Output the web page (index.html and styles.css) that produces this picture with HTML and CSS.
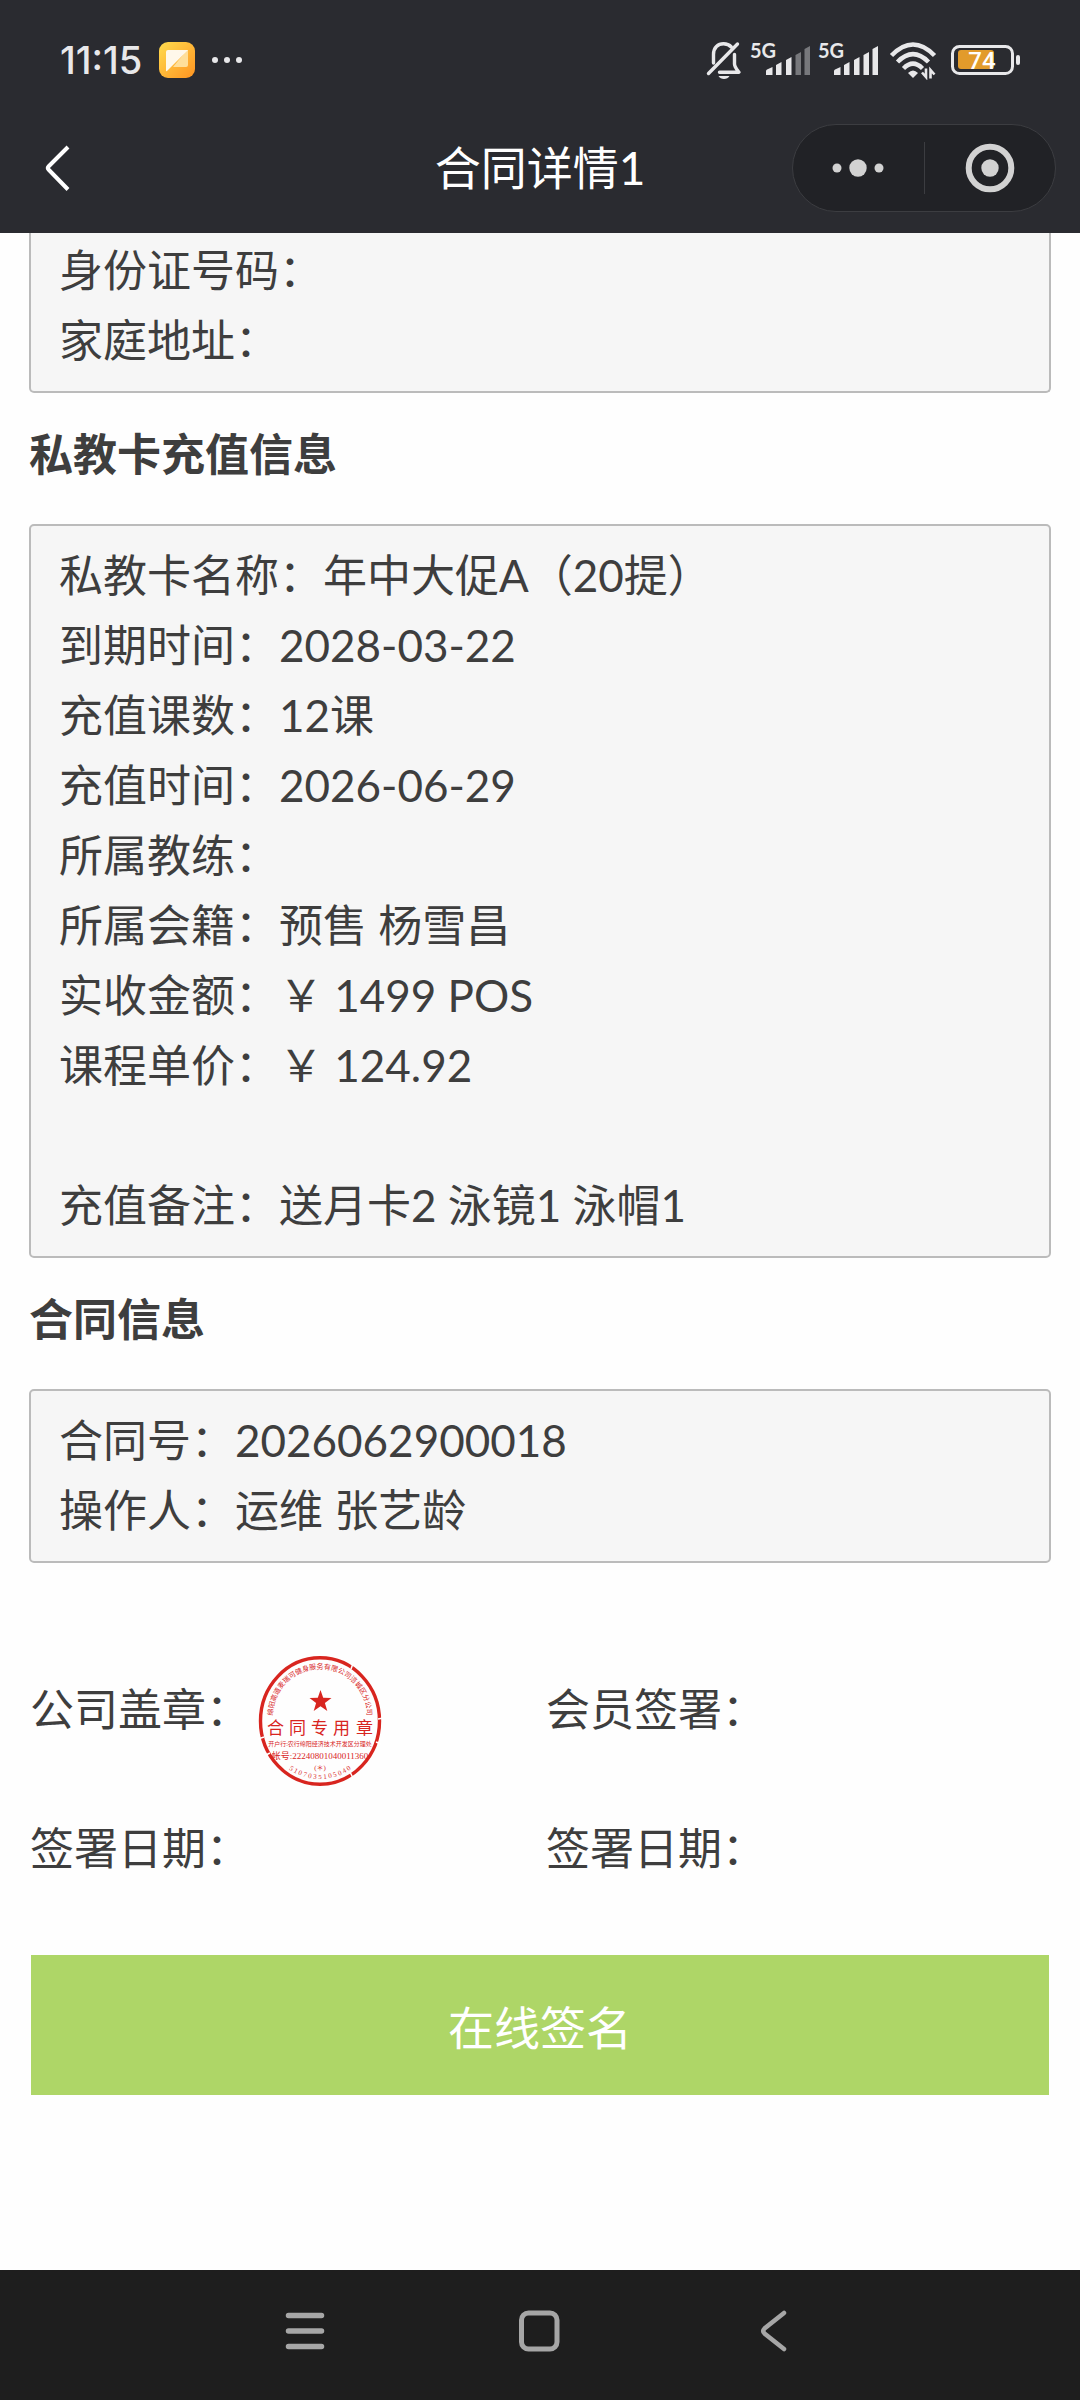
FILE: index.html
```html
<!DOCTYPE html>
<html lang="zh-CN">
<head>
    <meta charset="UTF-8">
    <meta name="viewport" content="width=device-width, initial-scale=1.0">
    <title>合同详情1</title>
    <link rel="stylesheet" href="styles.css">
</head>
<body>

    <header class="header">
        <div class="status">
            <div class="status-left">
                <span class="time">11:15</span>
                <svg class="app" width="36" height="36" viewBox="0 0 36 36">
                    <defs>
                        <linearGradient id="appBg" x1="0" y1="0" x2="1" y2="1">
                            <stop offset="0" stop-color="#ffdc4e"/>
                            <stop offset="1" stop-color="#ff9421"/>
                        </linearGradient>
                    </defs>
                    <rect width="36" height="36" rx="9" fill="url(#appBg)"/>
                    <path d="M29 8v15a2 2 0 0 1-2 2H14L28 8z" fill="#ffdf9a"/>
                    <path d="M9 8h20L8 29q-1 1-1-1V10q0-2 2-2z" fill="#fff8ea"/>
                </svg>
                <svg width="32" height="8" viewBox="0 0 32 8" fill="#e8e8ea">
                    <circle cx="3" cy="4" r="3"/>
                    <circle cx="15" cy="4" r="3"/>
                    <circle cx="27" cy="4" r="3"/>
                </svg>
            </div>
            <div class="status-right">
                <!-- 静音 -->
                <svg width="38" height="40" viewBox="0 0 38 40" fill="none" stroke="#e8e8ea" stroke-width="3.4" stroke-linecap="round" stroke-linejoin="round">
                    <path d="M3.500 33.500L32.500 4"/>
                    <path d="M8.500 23V14.500C8.500 7.500 13 3.800 18.500 3.800c3.500 0 6 1.200 7.800 3.200"/>
                    <path d="M29.500 14.500V24c0 3 2.500 5.500 4.500 8.200H14.500"/>
                    <path d="M13.500 36h11c-2 4-9 4-11 0z" fill="#e8e8ea" stroke="none"/>
                </svg>
                <svg class="signal" width="62" height="56" viewBox="0 -8 62 56">
                    <text x="1" y="18">5G</text>
                    <path d="M17 35v-4q0-1 1-1.500l5.500-2.500v8zM27 35V25l5.500-3v13zM37 35V20l5.500-3v18z"/>
                    <path class="off" d="M46.500 35V15l5.500-3v23zM55.500 35V9L61 6v29z"/>
                </svg>
                <svg class="signal" width="62" height="56" viewBox="0 -8 62 56">
                    <text x="1" y="18">5G</text>
                    <path d="M17 35v-4q0-1 1-1.500l5.500-2.500v8zM27 35V25l5.500-3v13zM37 35V20l5.500-3v18zM46.500 35V15l5.500-3v23zM55.500 35V9L61 6v29z"/>
                </svg>
                <svg width="54" height="40" viewBox="0 0 54 40" fill="none" stroke="#e8e8ea">
                    <path d="M6.500 15.500Q28 -6.500 49.500 15.500" stroke-width="4.500"/>
                    <path d="M12.500 22Q28 6.500 43.500 22" stroke-width="4.500"/>
                    <path d="M18.500 28.500Q28 19 37.500 28.500" stroke-width="4.500"/>
                    <path d="M23 33q5-5 10 0L28 38z" fill="#e8e8ea" stroke="none"/>
                    <path d="M41 28.500V37l-4-4.500M45.500 38.500V30l4 4.500" stroke-width="2.600"/>
                </svg>
                <svg class="battery" width="75" height="40" viewBox="0 0 75 40">
                    <rect x="7.500" y="6.500" width="60" height="27" rx="7" fill="none" stroke="#e8e8ea" stroke-width="3"/>
                    <rect x="71" y="15" width="4" height="10" rx="2" fill="#e8e8ea"/>
                    <rect x="13" y="10" width="36" height="19" rx="3" fill="#e29b2b"/>
                    <text x="37" y="29" text-anchor="middle">74</text>
                </svg>
            </div>
        </div>

        <div class="nav">
            <button class="back" aria-label="返回">
                <svg width="26" height="48" viewBox="0 0 26 48" fill="none" stroke="#fff" stroke-width="4" stroke-linejoin="round">
                    <path d="M24 3L4.500 22.500q-1.500 1.500 0 3L24 45.500"/>
                </svg>
            </button>
            <h1>合同详情1</h1>
            <div class="capsule">
                <button aria-label="更多">
                    <svg width="52" height="20" viewBox="0 0 52 20" fill="#d2d2d2">
                        <circle cx="5" cy="10" r="4.500"/>
                        <circle cx="26" cy="10" r="8.700"/>
                        <circle cx="47" cy="10" r="4.500"/>
                    </svg>
                </button>
                <button aria-label="关闭">
                    <svg width="50" height="50" viewBox="0 0 50 50">
                        <circle cx="25" cy="25" r="21.300" fill="none" stroke="#d2d2d2" stroke-width="6"/>
                        <circle cx="25" cy="25" r="8.700" fill="#d2d2d2"/>
                    </svg>
                </button>
            </div>
        </div>
    </header>

    <main class="main">
        <div class="box box-first">
            <p>身份证号码：</p>
            <p>家庭地址：</p>
        </div>

        <h2>私教卡充值信息</h2>
        <div class="box">
            <p>私教卡名称：年中大促A（20提）</p>
            <p>到期时间：2028-03-22</p>
            <p>充值课数：12课</p>
            <p>充值时间：2026-06-29</p>
            <p>所属教练：</p>
            <p>所属会籍：预售 杨雪昌</p>
            <p>实收金额：￥ 1499 POS</p>
            <p>课程单价：￥ 124.92</p>
            <p></p>
            <p>充值备注：送月卡2 泳镜1 泳帽1</p>
        </div>

        <h2>合同信息</h2>
        <div class="box">
            <p>合同号：2026062900018</p>
            <p>操作人：运维 张艺龄</p>
        </div>

        <div class="sign">
            <div class="sign-item stamp">
                <span>公司盖章：</span>
                <svg class="seal" width="124" height="132" viewBox="0 0 124 132">
                    <defs>
                        <path id="arcTop" d="M15 61A47 47 0 0 1 109 61"/>
                        <path id="arcBottom" d="M6 66A56 58 0 0 0 118 66"/>
                    </defs>
                    <ellipse cx="62" cy="66" rx="59.500" ry="63.200" fill="none" stroke="#d8251f" stroke-width="3.400"/>
                    <path d="M96 6l-3 8M0 84l6-2M120 64l5-1M91 115l4 8M8 100l4-2M118 87l5 2" stroke="#fff" stroke-width="1.500"/>
                    <path d="M62.500 35l2.700 7.800 8.300.1-6.600 5 2.400 8-6.800-4.700-6.800 4.700 2.400-8-6.600-5 8.300-.1z"/>
                    <text font-size="7" text-anchor="middle"><textPath href="#arcTop" startOffset="50%">绵阳高道麦瑞可健身服务有限公司涪城区分公司</textPath></text>
                    <text font-size="17" x="9 31 53 75 98" y="79">合同专用章</text>
                    <text font-size="6" x="62" y="91" text-anchor="middle">开户行:农行绵阳经济技术开发区分理处</text>
                    <text class="num" font-size="9" x="62" y="104" text-anchor="middle">帐号:22240801040011360</text>
                    <text class="num" font-size="7" x="62" y="115" text-anchor="middle">(＊)</text>
                    <text class="num" font-size="7" text-anchor="middle"><textPath href="#arcBottom" startOffset="50%">5 1 0 7 0 3 5 1 0 5 0 4 0</textPath></text>
                </svg>
            </div>
            <div class="sign-item stamp">
                <span>会员签署：</span>
            </div>
            <div class="sign-item">
                <span>签署日期：</span>
            </div>
            <div class="sign-item">
                <span>签署日期：</span>
            </div>
        </div>

        <button class="submit">在线签名</button>
    </main>

    <footer class="footer">
        <div class="keys">
            <button aria-label="多任务">
                <svg width="44" height="44" viewBox="0 0 44 44" stroke="#a6a6a6" stroke-width="5.500" stroke-linecap="round">
                    <path d="M4.500 6.500h33M4.500 22h33M4.500 37.500h33"/>
                </svg>
            </button>
            <button aria-label="主页">
                <svg width="44" height="44" viewBox="0 0 44 44" fill="none" stroke="#a6a6a6" stroke-width="5">
                    <rect x="3.500" y="4" width="35.500" height="36" rx="7"/>
                </svg>
            </button>
            <button aria-label="返回">
                <svg width="44" height="44" viewBox="0 0 44 44" fill="none" stroke="#a6a6a6" stroke-width="4.500" stroke-linecap="round">
                    <path d="M32 4L12.500 19.500q-2.500 2.500 0 5L32 40"/>
                </svg>
            </button>
        </div>
    </footer>

</body>
</html>
```

FILE: styles.css
```css
* {
    box-sizing: border-box;
}
body {
    margin: 0;
    min-height: 100vh;
    display: flex;
    flex-direction: column;
    background: #fefefe;
    color: #3e3e3e;
    font-family: Lato, "Noto Sans CJK SC", sans-serif;
    font-size: 44px;
    line-height: 70px;
}
h1, h2, p {
    margin: 0;
}
svg {
    display: block;
}
button {
    border: 0;
    padding: 0;
    background: none;
    font-family: inherit;
}

/* 顶部 */
.header {
    background: #2a2b30;
    padding-bottom: 17px;
}
.status {
    height: 120px;
    padding: 0 60px;
    display: flex;
    align-items: center;
    justify-content: space-between;
}
.status-left {
    display: flex;
    align-items: center;
    gap: 17px;
}
.status-right {
    display: flex;
    align-items: center;
    gap: 6px;
}
.time {
    color: #e8e8ea;
    font-family: Inter, sans-serif;
    font-size: 38px;
    font-weight: 500;
}
.signal {
    fill: #e8e8ea;
    font-family: Lato, sans-serif;
    font-size: 20px;
    font-weight: 700;
}
.signal .off {
    fill: #77787c;
}
.battery {
    fill: #fff;
    font-family: Roboto, sans-serif;
    font-size: 24px;
    font-weight: 500;
}
.nav {
    height: 96px;
    padding: 0 24px;
    display: grid;
    grid-template-columns: 1fr auto 1fr;
    align-items: center;
}
.nav h1 {
    color: #fff;
    font-size: 46px;
    font-weight: 400;
}
.back {
    justify-self: start;
    margin-left: 20px;
}
.capsule {
    justify-self: end;
    width: 264px;
    height: 88px;
    border: 1px solid #3c3d41;
    border-radius: 44px;
    background: #212226;
    display: flex;
    align-items: center;
}
.capsule button {
    flex: 1;
    height: 52px;
    display: flex;
    align-items: center;
    justify-content: center;
}
.capsule button + button {
    border-left: 1px solid #3c3d41;
}

/* 内容 */
.main {
    flex: 1;
    padding: 0 29px;
}
.box {
    border: 2px solid #bbb;
    border-radius: 5px;
    background: #f6f6f6;
    padding: 14px 28px 16px;
}
.box p {
    min-height: 70px;
}
.box-first {
    border-top: 0;
    border-radius: 0 0 5px 5px;
    padding-top: 2px;
}
h2 {
    padding: 26px 0 35px;
    font-size: 44px;
    font-weight: 700;
}
.sign {
    margin-top: 92px;
    padding: 0 1px;
    display: grid;
    grid-template-columns: 1fr 1fr;
    column-gap: 12px;
    row-gap: 26px;
}
.sign-item {
    display: flex;
}
.stamp span {
    padding-top: 19px;
}
.seal {
    margin-left: 8px;
    fill: #d8251f;
    font-family: "Noto Sans CJK SC", sans-serif;
}
.seal .num {
    font-family: "Liberation Serif", "Noto Sans CJK SC", serif;
}
.submit {
    display: block;
    width: 100%;
    height: 140px;
    margin-top: 72px;
    border: solid #fefefe;
    border-width: 0 2px;
    background: #aed667;
    color: #fff;
    font-size: 46px;
}

/* 底部按键 */
.footer {
    height: 130px;
    padding-bottom: 8px;
    background: #1e1e1e;
    display: flex;
    align-items: center;
    justify-content: center;
}
.keys {
    width: 65%;
    display: grid;
    grid-template-columns: repeat(3, 1fr);
    justify-items: center;
}
```
